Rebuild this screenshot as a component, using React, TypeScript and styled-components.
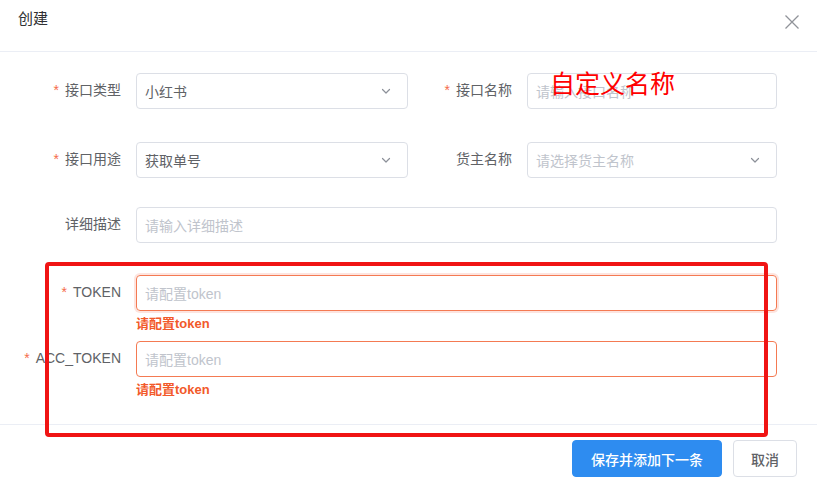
import React from "react"
import styled, { createGlobalStyle } from "styled-components"

const GlobalStyle = createGlobalStyle`
  html, body {
    margin: 0;
    padding: 0;
    background: #ffffff;
  }
  body {
    font-family: "Liberation Sans", "Noto Sans CJK SC", "Noto Sans", sans-serif;
  }
`

const Dialog = styled.div`
  position: relative;
  width: 817px;
  height: 487px;
  background: #fff;
  overflow: hidden;
`

const Header = styled.div`
  height: 52px;
  box-sizing: border-box;
  border-bottom: 1px solid #ebeef5;
  display: flex;
  align-items: flex-start;
  justify-content: space-between;
  padding: 8px 17px 0 18px;
`

const Title = styled.div`
  font-size: 15px;
  line-height: 22px;
  color: #303133;
`

const CloseBtn = styled.button`
  border: none;
  background: none;
  padding: 0;
  margin-top: 6px;
  width: 16px;
  height: 16px;
  cursor: pointer;
  color: #909399;
`

const Body = styled.div`
  padding: 21px 40px 0 0;
  height: 373px;
  box-sizing: border-box;
  border-bottom: 1px solid #ebeef5;
`

const Row = styled.div<{ $mb: number }>`
  display: flex;
  margin-bottom: ${p => p.$mb}px;
`

const Field = styled.div<{ $labelWidth: number; $width?: number }>`
  display: grid;
  grid-template-columns: ${p => p.$labelWidth}px 1fr;
  column-gap: 15px;
  ${p => (p.$width ? `width: ${p.$width}px;` : "flex: 1;")}
`

const Label = styled.label`
  text-align: right;
  font-size: 14px;
  line-height: 34px;
  color: #606266;
  white-space: nowrap;
`

const Star = styled.span`
  color: #f56c4c;
  margin-right: 6px;
`

const Control = styled.div<{ $error?: boolean; $focus?: boolean }>`
  height: 36px;
  box-sizing: border-box;
  border: 1px solid ${p => (p.$error ? "#f47a52" : "#dcdfe6")};
  border-radius: 4px;
  display: flex;
  align-items: center;
  padding: 0 15px 0 8px;
  font-size: 14px;
  box-shadow: ${p => (p.$focus ? "0 0 0 2px rgba(245, 108, 76, 0.18)" : "none")};
`

const Value = styled.span`
  flex: 1;
  color: #606266;
`

const Placeholder = styled.span`
  flex: 1;
  color: #c0c4cc;
  white-space: nowrap;
`

const Arrow = styled.svg`
  width: 12px;
  height: 12px;
  color: #8c9099;
`

const ErrorText = styled.div`
  grid-column: 2;
  margin-top: 4px;
  font-size: 13px;
  line-height: 18px;
  font-weight: 600;
  color: #f2592a;
`

const Footer = styled.div`
  display: flex;
  justify-content: flex-end;
  gap: 11px;
  padding: 15px 20px 0 0;
`

const Button = styled.button<{ $primary?: boolean }>`
  height: 37px;
  box-sizing: border-box;
  border-radius: 4px;
  font-family: inherit;
  font-size: 14px;
  font-weight: 500;
  padding: ${p => (p.$primary ? "0 18px" : "0 17px")};
  border: 1px solid ${p => (p.$primary ? "#2e8cf0" : "#dcdfe6")};
  background: ${p => (p.$primary ? "#2e8cf0" : "#fff")};
  color: ${p => (p.$primary ? "#fff" : "#606266")};
  cursor: pointer;
`

const Annotation = styled.div`
  position: absolute;
  left: 550px;
  top: 64px;
  font-family: "Noto Sans CJK SC", sans-serif;
  font-size: 25px;
  line-height: 36px;
  color: #ff0000;
  pointer-events: none;
`

const Highlight = styled.div`
  position: absolute;
  left: 45px;
  top: 262px;
  width: 723px;
  height: 175px;
  box-sizing: border-box;
  border: 4px solid #f01414;
  border-radius: 4px;
  pointer-events: none;
`

const ChevronDown = () => (
  <Arrow viewBox="0 0 12 12" fill="none">
    <path d="M2.5 4.5 6 8l3.5-3.5" stroke="currentColor" strokeWidth="1.2" strokeLinecap="round" strokeLinejoin="round" />
  </Arrow>
)

const App = () => {
  return (
    <>
      <GlobalStyle />
      <Dialog>
        <Header>
          <Title>创建</Title>
          <CloseBtn aria-label="close">
            <svg viewBox="0 0 16 16" width="16" height="16">
              <path d="M1.5 1.5l13 13M14.5 1.5l-13 13" stroke="currentColor" strokeWidth="1.3" />
            </svg>
          </CloseBtn>
        </Header>

        <Body>
          <Row $mb={33}>
            <Field $labelWidth={121} $width={408}>
              <Label><Star>*</Star>接口类型</Label>
              <Control>
                <Value>小红书</Value>
                <ChevronDown />
              </Control>
            </Field>
            <Field $labelWidth={104}>
              <Label><Star>*</Star>接口名称</Label>
              <Control>
                <Placeholder>请输入接口名称</Placeholder>
              </Control>
            </Field>
          </Row>

          <Row $mb={29}>
            <Field $labelWidth={121} $width={408}>
              <Label><Star>*</Star>接口用途</Label>
              <Control>
                <Value>获取单号</Value>
                <ChevronDown />
              </Control>
            </Field>
            <Field $labelWidth={104}>
              <Label>货主名称</Label>
              <Control>
                <Placeholder>请选择货主名称</Placeholder>
                <ChevronDown />
              </Control>
            </Field>
          </Row>

          <Row $mb={32}>
            <Field $labelWidth={121}>
              <Label>详细描述</Label>
              <Control>
                <Placeholder>请输入详细描述</Placeholder>
              </Control>
            </Field>
          </Row>

          <Row $mb={8}>
            <Field $labelWidth={121}>
              <Label><Star>*</Star>TOKEN</Label>
              <Control $error $focus>
                <Placeholder>请配置token</Placeholder>
              </Control>
              <ErrorText>请配置token</ErrorText>
            </Field>
          </Row>

          <Row $mb={0}>
            <Field $labelWidth={121}>
              <Label><Star>*</Star>ACC_TOKEN</Label>
              <Control $error>
                <Placeholder>请配置token</Placeholder>
              </Control>
              <ErrorText>请配置token</ErrorText>
            </Field>
          </Row>
        </Body>

        <Footer>
          <Button $primary>保存并添加下一条</Button>
          <Button>取消</Button>
        </Footer>

        <Annotation>自定义名称</Annotation>
        <Highlight />
      </Dialog>
    </>
  )
}

export default App
